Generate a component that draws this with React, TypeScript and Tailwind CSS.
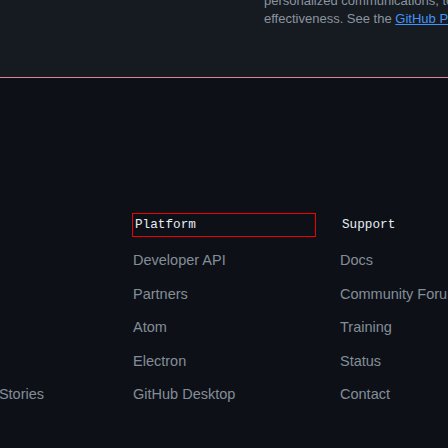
const columns = [
  {
    title: "Product",
    width: "w-[176px]",
    links: ["Features", "Security", "Team", "Enterprise", "Customer Stories"],
  },
  {
    title: "Platform",
    width: "w-[182px]",
    focused: true,
    links: ["Developer API", "Partners", "Atom", "Electron", "GitHub Desktop"],
  },
  {
    title: "Support",
    width: "w-[182px]",
    links: ["Docs", "Community Forum", "Training", "Status", "Contact"],
  },
];

export default function App() {
  return (
    <div className="h-[448px] w-[448px] overflow-hidden bg-[#0d1117] font-['Liberation_Sans',Arial,sans-serif]">
      {/* cookie notice tail */}
      <section className="h-[77px] overflow-hidden bg-[#161b22] pl-[264px]">
        <p className="-mt-[8px] whitespace-nowrap text-[13px] leading-[18px] text-[#8b949e]">
          personalized communications, to improve our services and
          <br />
          effectiveness. See the{" "}
          <a className="text-[#4493f8] underline">GitHub Privacy Statement</a>
        </p>
      </section>
      <div className="h-px bg-[#de8494]" />

      <footer className="-ml-[68px] flex gap-[25px] pt-[136px]">
        {columns.map((col) => (
          <div key={col.title} className={`${col.width} shrink-0`}>
            <h3
              className={
                col.focused
                  ? "h-[22px] whitespace-nowrap pl-[2px] font-['Liberation_Mono',monospace] text-[12.7px] leading-[22px] text-[#e6edf3] outline outline-1 outline-[#f00000]"
                  : "h-[22px] whitespace-nowrap pl-[2px] font-['Liberation_Mono',monospace] text-[12.7px] leading-[22px] text-[#e6edf3]"
              }
            >
              {col.title}
            </h3>
            <ul className="mt-[14px] flex flex-col gap-[13.5px]">
              {col.links.map((l) => (
                <li
                  key={l}
                  className="h-[20px] whitespace-nowrap text-[14.5px] leading-[20px] text-[#848d97]"
                >
                  {l}
                </li>
              ))}
            </ul>
          </div>
        ))}
      </footer>
    </div>
  );
}
